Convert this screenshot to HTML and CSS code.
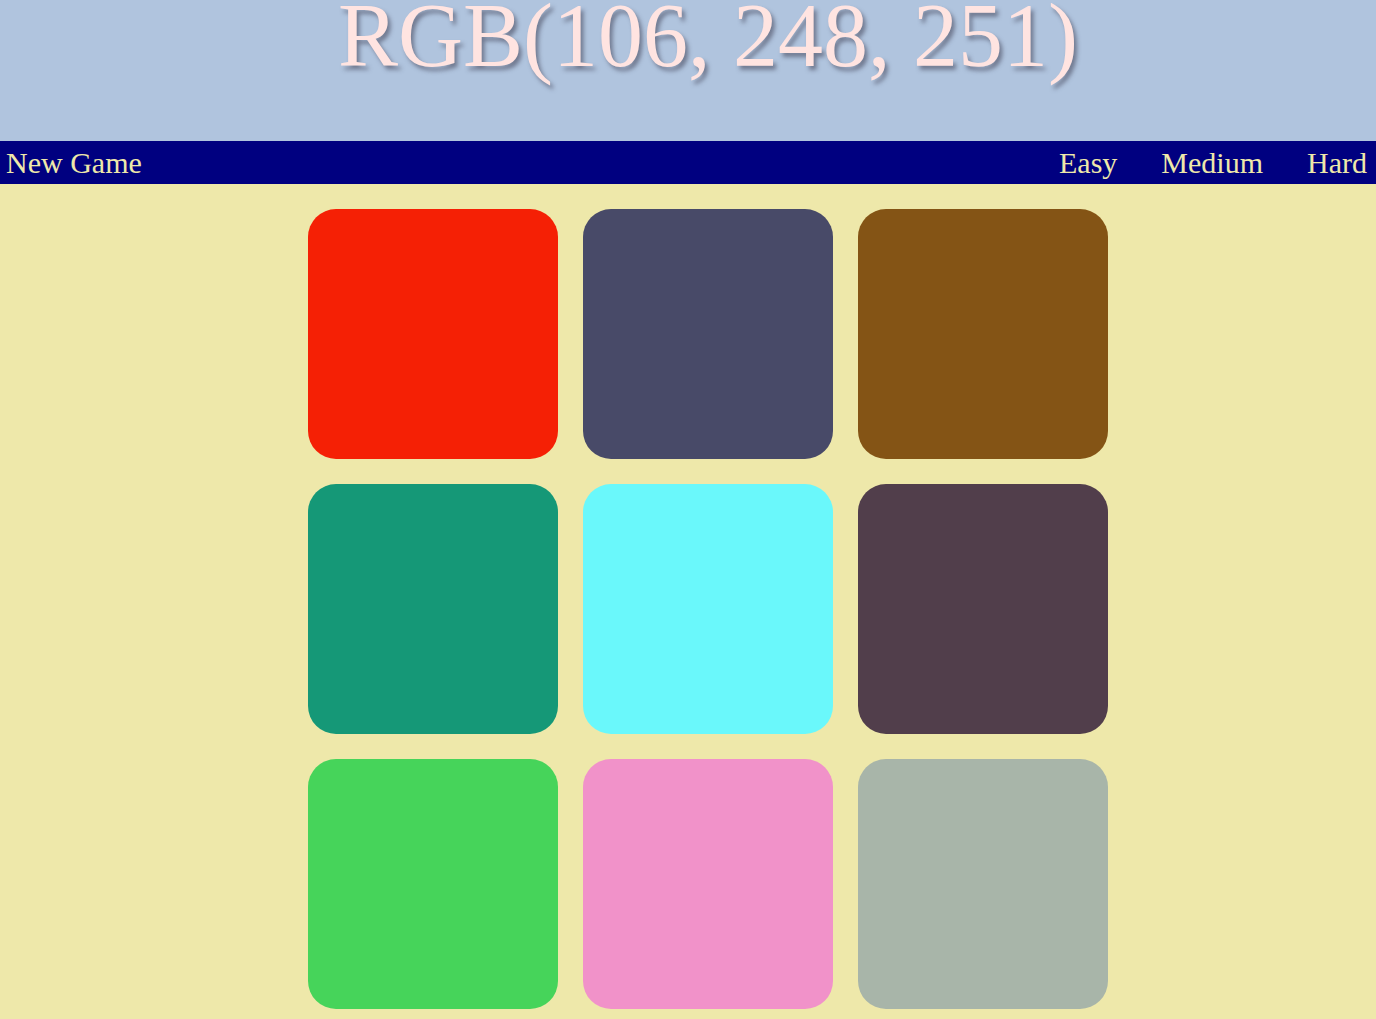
FILE: index.html
```html
<!DOCTYPE html>
<html>
<head>
<meta charset="utf-8">
<link rel="stylesheet" href="styles.css">
</head>
<body>
<header class="header">
  <h1 class="title">RGB(106, 248, 251)</h1>
</header>
<nav class="nav">
  <span class="nav-item">New Game</span>
  <div class="levels">
    <span class="nav-item">Easy</span>
    <span class="nav-item">Medium</span>
    <span class="nav-item">Hard</span>
  </div>
</nav>
<main class="board">
  <div class="grid">
    <div class="sq c1"></div>
    <div class="sq c2"></div>
    <div class="sq c3"></div>
    <div class="sq c4"></div>
    <div class="sq c5"></div>
    <div class="sq c6"></div>
    <div class="sq c7"></div>
    <div class="sq c8"></div>
    <div class="sq c9"></div>
  </div>
</main>
</body>
</html>
```
FILE: styles.css
```css
html, body {
  margin: 0;
  padding: 0;
  background: #EEE8AA;
  font-family: "Liberation Serif", "Times New Roman", serif;
}
.header {
  background: #B0C4DE;
  height: 141px;
  overflow: hidden;
  padding-left: 40px;
}
.title {
  margin: 0;
  text-align: center;
  font-weight: normal;
  font-size: 90px;
  line-height: 72px;
  color: #FFE4E1;
  text-shadow: 3px 4px 4px rgba(60, 60, 80, 0.55);
}
.nav {
  background: #000080;
  height: 43px;
  display: flex;
  align-items: center;
  justify-content: space-between;
  padding: 0 9px 0 6px;
}
.nav-item {
  color: #EEE8AA;
  font-size: 30px;
  line-height: 43px;
}
.levels {
  display: flex;
  gap: 44px;
}
.board {
  width: 840px;
  margin: 0 auto;
  padding: 25px 0 0 40px;
  box-sizing: border-box;
}
.grid {
  display: grid;
  grid-template-columns: repeat(3, 250px);
  gap: 25px;
}
.sq {
  width: 250px;
  height: 250px;
  border-radius: 28px;
}
.c1 { background: #F52005; }
.c2 { background: #484A68; }
.c3 { background: #845415; }
.c4 { background: #159877; }
.c5 { background: #6AF8FB; }
.c6 { background: #513E4B; }
.c7 { background: #46D45A; }
.c8 { background: #F192C9; }
.c9 { background: #A8B5A9; }
```
